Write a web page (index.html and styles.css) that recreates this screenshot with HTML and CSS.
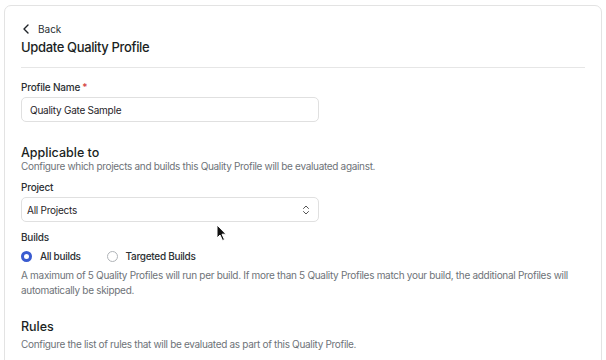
FILE: index.html
```html
<!DOCTYPE html>
<html>
<head>
<meta charset="utf-8">
<link rel="stylesheet" href="styles.css">
</head>
<body>
<div class="card">
  <div class="back">
    <svg class="chev" width="8" height="10" viewBox="0 0 8 10"><path d="M6 1 L2 5 L6 9" fill="none" stroke="#1f2328" stroke-width="1.4" stroke-linecap="round" stroke-linejoin="round"/></svg>
    <span>Back</span>
  </div>
  <h1 class="title">Update Quality Profile</h1>
  <hr class="sep">
  <label class="label">Profile Name<span class="req">*</span></label>
  <div class="input">Quality Gate Sample</div>

  <h2 class="section">Applicable to</h2>
  <p class="desc">Configure which projects and builds this Quality Profile will be evaluated against.</p>
  <label class="label">Project</label>
  <div class="input select">
    <span>All Projects</span>
    <svg width="8" height="12" viewBox="0 0 8 12"><path d="M1.5 4.5 L4 2 L6.5 4.5 M1.5 7.5 L4 10 L6.5 7.5" fill="none" stroke="#555" stroke-width="1" stroke-linecap="round" stroke-linejoin="round"/></svg>
  </div>
  <label class="label builds">Builds</label>
  <div class="radios">
    <div class="radio"><span class="dot on"></span>All builds</div>
    <div class="radio"><span class="dot"></span>Targeted Builds</div>
  </div>
  <p class="note">A maximum of 5 Quality Profiles will run per build. If more than 5 Quality Profiles match your build, the additional Profiles will automatically be skipped.</p>

  <h2 class="section rules">Rules</h2>
  <p class="desc">Configure the list of rules that will be evaluated as part of this Quality Profile.</p>
</div>
<svg class="cursor" width="12" height="18" viewBox="0 0 12 18"><path d="M1 1 L1 14 L4 11 L6.5 16.5 L8.5 15.6 L6 10.2 L10 10.2 Z" fill="#111" stroke="#fff" stroke-width="1"/></svg>
</body>
</html>
```
FILE: styles.css
```css
html, body { margin: 0; padding: 0; background: #fff; }
body {
  font-family: Inter, "Noto Sans", sans-serif;
  color: #1f2328;
  width: 606px;
  height: 360px;
  overflow: hidden;
  position: relative;
}
.card {
  margin: 5px 4px 0 4px;
  border: 1px solid #e3e3e3;
  border-radius: 7px;
  padding: 14px 16px 40px 16px;
  height: 400px;
  box-sizing: border-box;
}
.back {
  display: flex;
  align-items: center;
  gap: 8px;
  font-size: 10px;
  color: #2a2e33;
  height: 18px;
}
.chev { margin-left: 1px; }
.title {
  font-size: 13px;
  letter-spacing: -0.35px;
  font-weight: 500;
  margin: 0;
  line-height: 18px;
  color: #1b1f23;
}
.sep {
  border: 0;
  border-top: 1px solid #e6e6e6;
  margin: 11px 0 0 0;
}
.label {
  display: block;
  font-size: 10px;
  letter-spacing: -0.2px;
  font-weight: 500;
  color: #2b2f33;
  line-height: 14px;
}
.sep + .label { margin-top: 12px; }
.req { color: #d23c3c; margin-left: 2px; }
.input {
  width: 298px;
  height: 25px;
  box-sizing: border-box;
  border: 1px solid #e0e0e0;
  border-radius: 5px;
  margin-top: 3px;
  padding: 0 8px;
  display: flex;
  align-items: center;
  font-size: 10px;
  letter-spacing: -0.25px;
  color: #1f2328;
}
.select { justify-content: space-between; padding-left: 5px; padding-right: 8px; }
.section {
  font-size: 12.5px;
  font-weight: 500;
  margin: 24px 0 0 0;
  line-height: 14px;
  color: #1b1f23;
}
.desc {
  font-size: 10px;
  letter-spacing: -0.32px;
  color: #6e7378;
  margin: 0 0 8px 0;
  line-height: 12px;
}
.label.builds { margin-top: 8px; }
.radios {
  display: flex;
  gap: 26px;
  margin-top: 4px;
  height: 16px;
  align-items: center;
}
.radio {
  display: flex;
  align-items: center;
  gap: 8px;
  font-size: 10px;
  letter-spacing: -0.3px;
  font-weight: 500;
  color: #2b2f33;
}
.dot {
  width: 11px;
  height: 11px;
  border-radius: 50%;
  border: 1px solid #b0b4b8;
  box-sizing: border-box;
  display: inline-block;
}
.dot.on {
  border: 3.5px solid #3a5bd0;
  background: #fff;
}
.note {
  font-size: 10px;
  letter-spacing: -0.3px;
  color: #6e7378;
  line-height: 15px;
  margin: 4px 0 0 0;
}
.section.rules { margin-top: 22px; }
.section.rules + .desc { margin-top: 4px; }
.cursor {
  position: absolute;
  left: 216px;
  top: 224px;
}
```
